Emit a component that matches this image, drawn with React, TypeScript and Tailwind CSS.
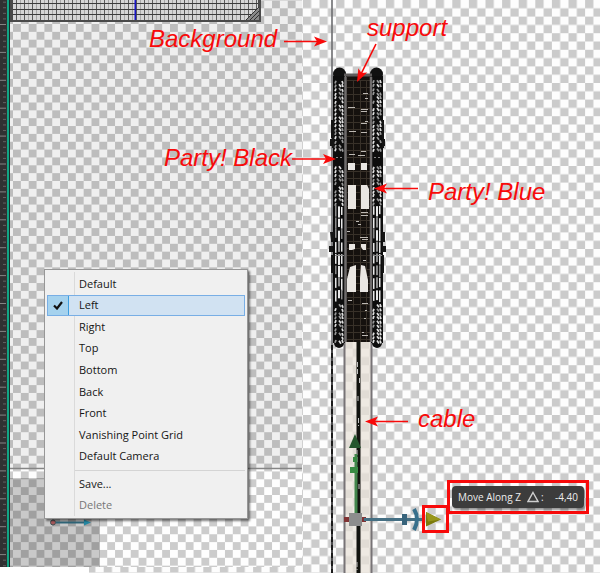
import React from "react";

const RED = "#f80a0a";

const VIEWS = [
  "Default",
  "Left",
  "Right",
  "Top",
  "Bottom",
  "Back",
  "Front",
  "Vanishing Point Grid",
  "Default Camera",
];

function noise(n: number) {
  const v = Math.sin(n * 127.1 + 31.7) * 43758.5453;
  return v - Math.floor(v);
}

function Checker({ id, size, x, y, light, dark }: { id: string; size: number; x: number; y: number; light: string; dark: string }) {
  const h = size / 2;
  return (
    <pattern id={id} x={x} y={y} width={size} height={size} patternUnits="userSpaceOnUse">
      <rect width={size} height={size} fill={light} />
      <rect width={h} height={h} fill={dark} />
      <rect x={h} y={h} width={h} height={h} fill={dark} />
    </pattern>
  );
}

function Ruler() {
  const ticks = [];
  for (let i = -4; i < 98; i++) {
    const major = i % 5 === 0;
    ticks.push(<path key={i} d={`M${major ? 0 : 3} ${24.5 + i * 5.58}H6`} stroke={major ? "#858585" : "#626262"} />);
  }
  return (
    <g>
      <rect width="10" height="567" fill="#303132" />
      {ticks}
      <rect x="7" width="2" height="567" fill="#12a685" />
      <rect x="9" width="1" height="567" fill="#1b2b2a" />
    </g>
  );
}

function GridPanel() {
  const lines = [];
  for (let x = 16; x < 258; x += 4) {
    lines.push(<path key={x} d={`M${x + 0.5} 0V20`} stroke={(x - 16) % 8 ? "#a6a6a6" : "#5c5c5c"} />);
  }
  return (
    <g>
      <rect x="10" width="251" height="22" fill="#4a4a4a" />
      <rect x="13" width="245" height="20" fill="#d6d6d6" />
      {lines}
      <path d="M13 3.5H258M13 9.5H258M13 14.5H258" stroke="#3c3c3c" />
      <rect x="134.5" width="1.6" height="20" fill="#1914c8" />
      <path d="M246 20L259 7V20Z" fill="#8a8a8a" />
      <path d="M246 20L259 7M250 20L259 11M254 20L259 15" stroke="#333" fill="none" />
    </g>
  );
}

function Chain({ x }: { x: number }) {
  const parts = [];
  let k = x;
  const links = [[80, 150], [166, 204], [304, 342]];
  for (const [a, b] of links) {
    for (let y = a; y < b; y += 4) {
      for (let c = 0; c < 3; c++) {
        k++;
        if (noise(k) > 0.12) {
          parts.push(
            <path
              key={`${y}-${c}`}
              d={`M${x + 2 + c * 3} ${y + noise(k + 9)}l${c === 1 ? 2 : c - 1} 2.8`}
              stroke={noise(k + 3) > 0.35 ? "#e0e0e0" : "#9a9a9a"}
              strokeWidth="1.7"
            />,
          );
        }
      }
    }
  }
  for (let y = 205; y < 300; y += 12) {
    for (let c = 0; c < 3; c++) {
      k++;
      const shade = noise(k) > 0.35 ? "#e8e8e8" : "#8c8c8c";
      parts.push(<rect key={`s${y}-${c}`} x={x + 1 + c * 3} y={y + noise(k) * 2} width={c === 1 ? 2 : 1.5} height={8 + noise(k + 4) * 4} fill={shade} />);
    }
  }
  parts.push(<path key="pins" d={`M${x + 2} 157.5h2M${x + 6} 157.5h2M${x + 1} 255.5h9`} stroke="#8a8a8a" />);
  return <g fill="none">{parts}</g>;
}

function Tower() {
  const flecks = [
    [363, 93, 5], [365, 98, 3], [348, 107, 7], [361, 109, 7], [361, 111, 6], [365, 121, 3], [361, 123, 6],
    [349, 131, 7], [361, 132, 6], [361, 151, 5], [349, 154, 6], [358, 155, 7], [361, 212, 7], [361, 215, 7],
    [356, 221, 3], [358, 224, 3], [347, 231, 3], [360, 237, 8], [362, 239, 6], [363, 260, 3], [348, 300, 4],
    [362, 303, 6], [365, 310, 2], [364, 318, 2], [362, 332, 2], [362, 335, 6],
  ];
  const mesh = [];
  for (let y = 80; y < 342; y += 7) mesh.push(`M347 ${y}.5H370`);
  return (
    <g>
      <path d="M332 0V573" stroke="#6c6d70" strokeWidth="1.6" />
      <path d="M332 345V573" stroke="#4a4a4c" strokeWidth="2" />
      <path d="M332 345V573" stroke="#1c1c1c" strokeWidth="2" strokeDasharray="5 3" />

      <rect x="345" y="342" width="26" height="231" fill="#e8e2d8" opacity="0.75" />
      <path d="M344.500 342V573M371.500 342V573" stroke="#777376" strokeWidth="2" />
      <path d="M358.500 342V573" stroke="#12130f" strokeWidth="4" />
      <path d="M357.500 362V374M359.500 378V384M358 396V402M358.500 418V426M357 450V464M359 484V490M357 562V570" stroke="#c4c4c4" strokeDasharray="5 2" />

      <circle cx="339.500" cy="74" r="6.500" fill="#101010" />
      <circle cx="376.500" cy="74" r="6.500" fill="#101010" />
      <rect x="333" y="76" width="12" height="267" fill="#0d0d0d" />
      <rect x="371" y="76" width="12" height="267" fill="#0d0d0d" />
      <rect x="334" y="335" width="10" height="13" rx="5" fill="#0d0d0d" />
      <rect x="372" y="335" width="10" height="13" rx="5" fill="#0d0d0d" />
      <path d="M331 120h3v28h-2v-10h-1zM330 139h4v7h-4zM330 232h4v10h-3zM329 246h4v6h-4zM331 255h3v18h-3zM382 120h2v28h-2zM382 139h3v7h-3zM382 232h3v10h-3zM382 246h4v6h-4zM382 255h2v18h-2z" fill="#151515" />

      <rect x="346" y="76" width="25" height="266" fill="#15110e" />
      <path d="M353.500 80V342M360.500 80V342M366.500 80V342" stroke="#383129" />
      <path d={mesh.join("")} stroke="#383129" />
      <path d="M345.500 77V342M371 77V342" stroke="#6f6c6c" strokeWidth="2.500" />
      <path d="M344 75H372" stroke="#5f5c5c" strokeWidth="3" />

      <g fill="#e9e6e2">
        <path d="M348 163h7v7h-7zM361 163h6v7h-6zM348 185h8v24h-8zM361 185h6l2 4v20h-8zM349 244h6v5l-3 1h-3zM361 244h5v6h-3l-2-3zM350 267l6-2v27h-9v-13zM361 265l4 1 3 14v12h-8v-14z" />
      </g>
      {flecks.map(([x, y, w], i) => (
        <path key={i} d={`M${x} ${y}.5h${w}`} stroke="#bdb9b4" />
      ))}
      <Chain x={334} />
      <Chain x={372} />
    </g>
  );
}

function Gizmos() {
  return (
    <g>
      <path d="M356 514V454" stroke="#43864c" strokeWidth="3" />
      <path d="M355 434l6 14h-12z" fill="#25562d" />
      <rect x="350" y="467" width="8" height="6" fill="#388b43" />
      <rect x="353" y="457" width="4" height="5" fill="#388b43" />
      <rect x="344" y="517" width="22" height="5" fill="#803334" />
      <path d="M364 519.500H425" stroke="#456f83" strokeWidth="3" />
      <rect x="402" y="514" width="5" height="11" fill="#38647c" />
      <path d="M414 509q6 10 0 21" fill="none" stroke="#38708c" strokeWidth="4" />
      <rect x="349" y="513" width="13" height="13" fill="#8d8d8d" />
      <path d="M426 512l15 7.500-15 7z" fill="#7b7a0c" />
      <path d="M426 512l15 7.500-13 2z" fill="#98961a" />

      <path d="M56 522.500H86" stroke="#30677a" strokeWidth="2" />
      <path d="M84 519.500l7 3-7 3z" fill="#2588a3" />
      <circle cx="53" cy="522.500" r="2.500" fill="#a6585b" stroke="#415054" />
    </g>
  );
}

function Arrow({ x1, y1, x2, y2 }: { x1: number; y1: number; x2: number; y2: number }) {
  const angle = (Math.atan2(y2 - y1, x2 - x1) * 180) / Math.PI;
  const length = Math.hypot(x2 - x1, y2 - y1);
  return (
    <g transform={`translate(${x1} ${y1}) rotate(${angle})`}>
      <path d={`M0 0H${length - 8}`} stroke={RED} strokeWidth="1.600" />
      <path d={`M${length} 0l-13-5 3 5-3 5z`} fill={RED} />
    </g>
  );
}

function Scene() {
  return (
    <svg className="absolute inset-0 h-full w-full" aria-hidden="true">
      <defs>
        <Checker id="right" size={16.6} x={319.5} y={0} light="#fdfdfd" dark="#cbcbcb" />
        <Checker id="upper" size={15.7} x={13} y={24} light="#efefef" dark="#bdbdbd" />
        <Checker id="lower" size={15.7} x={13} y={24} light="#fefefe" dark="#cccccc" />
        <Checker id="shade" size={15.7} x={13} y={24} light="#c9c9c9" dark="#a0a0a0" />
      </defs>
      <rect width="100%" height="100%" fill="url(#right)" />
      <rect width="302" height="468" fill="url(#upper)" />
      <rect y="468" width="302" height="99" fill="url(#lower)" />
      <rect y="478" width="100" height="89" fill="url(#shade)" />
      <path d="M10 468.500H302" stroke="#858585" strokeWidth="1.500" />
      <rect y="567" width="89" height="6" fill="#fff" />
      <Ruler />
      <GridPanel />
      <Tower />
      <Gizmos />
      <Arrow x1={284} y1={41.5} x2={327} y2={41.5} />
      <Arrow x1={376} y1={44} x2={357} y2={82} />
      <Arrow x1={292} y1={159} x2={336} y2={159} />
      <Arrow x1={418} y1={188.5} x2={374} y2={188.5} />
      <Arrow x1={408} y1={421.5} x2={365} y2={421.5} />
    </svg>
  );
}

function Label({ place, children }: { place: string; children: string }) {
  return <span className={`absolute text-2xl leading-7 whitespace-nowrap text-[#f80a0a] italic ${place}`}>{children}</span>;
}

function MenuItem({ name, checked = false, disabled = false }: { name: string; checked?: boolean; disabled?: boolean }) {
  return (
    <button
      type="button"
      role={disabled || name === "Save..." ? "menuitem" : "menuitemradio"}
      aria-checked={disabled || name === "Save..." ? undefined : checked}
      disabled={disabled}
      className={`flex items-stretch text-left ${checked ? "bg-[#d1e2f2] outline -outline-offset-1 outline-[#78aee5]" : ""} ${disabled ? "text-[#777777]" : "text-[#151515]"}`}
    >
      <span className={`flex w-[22px] items-center justify-center ${checked ? "border border-[#3d9fe0] bg-[#a5d2ee]" : ""}`}>
        {checked && (
          <svg width="10" height="9" viewBox="0 0 10 9" aria-hidden="true">
            <path d="M1 4.500L4 7.500L9 1" fill="none" stroke="#111" strokeWidth="2.200" />
          </svg>
        )}
      </span>
      <span className="flex items-center pl-[10px]">{name}</span>
    </button>
  );
}

function ViewMenu() {
  return (
    <div
      role="menu"
      aria-label="Camera view"
      className="absolute top-[269px] left-[44px] w-[204px] border border-[#979797] bg-[#f0f0f0] px-0.5 pt-[3px] pb-0.5 font-['Open_Sans',sans-serif] text-[11px] leading-4 font-medium shadow-[2px_2px_2px_rgba(0,0,0,0.5)]"
    >
      <div className="absolute top-0.5 bottom-0.5 left-[29px] w-px bg-[#dadada]" />
      <div className="relative grid h-[194px] grid-rows-9">
        {VIEWS.map((name) => (
          <MenuItem key={name} name={name} checked={name === "Left"} />
        ))}
      </div>
      <div role="separator" className="mt-[3px] mb-0.5 ml-7 border-t border-[#d4d4d4]" />
      <div className="relative grid h-[43px] grid-rows-2">
        <MenuItem name="Save..." />
        <MenuItem name="Delete" disabled />
      </div>
    </div>
  );
}

export default function App() {
  return (
    <main className="relative min-h-screen w-full overflow-hidden bg-white font-['Liberation_Sans',Arial,sans-serif]">
      <Scene />
      <Label place="top-[25px] left-[149px]">Background</Label>
      <Label place="top-[14px] left-[367px]">support</Label>
      <Label place="top-[144px] left-[164px]">Party! Black</Label>
      <Label place="top-[178px] left-[428px]">Party! Blue</Label>
      <Label place="top-[405px] left-[418px]">cable</Label>
      <ViewMenu />
      <div className="absolute top-[505px] left-[422px] h-7 w-[27px] border-3 border-[#f80a0a]" />
      <div className="absolute top-[480px] left-[447px] border-3 border-[#f80a0a] px-[2px] py-[3px]">
        <div
          role="status"
          className="flex h-[22px] w-[132px] items-center rounded-sm bg-[#3c3c3c] px-1.5 font-['Open_Sans',sans-serif] text-[10px] leading-4 font-medium whitespace-nowrap text-[#ececec] shadow-[1px_2px_2px_rgba(0,0,0,0.4)]"
        >
          <span>Move Along Z</span>
          <svg className="ml-1.5" width="12" height="12" viewBox="0 0 12 12" aria-hidden="true">
            <path d="M6 1.500L11 10.500H1Z" fill="none" stroke="#cfcfcf" strokeWidth="1.400" />
          </svg>
          <span className="ml-0.5">:</span>
          <span className="ml-auto">-4,40</span>
        </div>
      </div>
    </main>
  );
}
